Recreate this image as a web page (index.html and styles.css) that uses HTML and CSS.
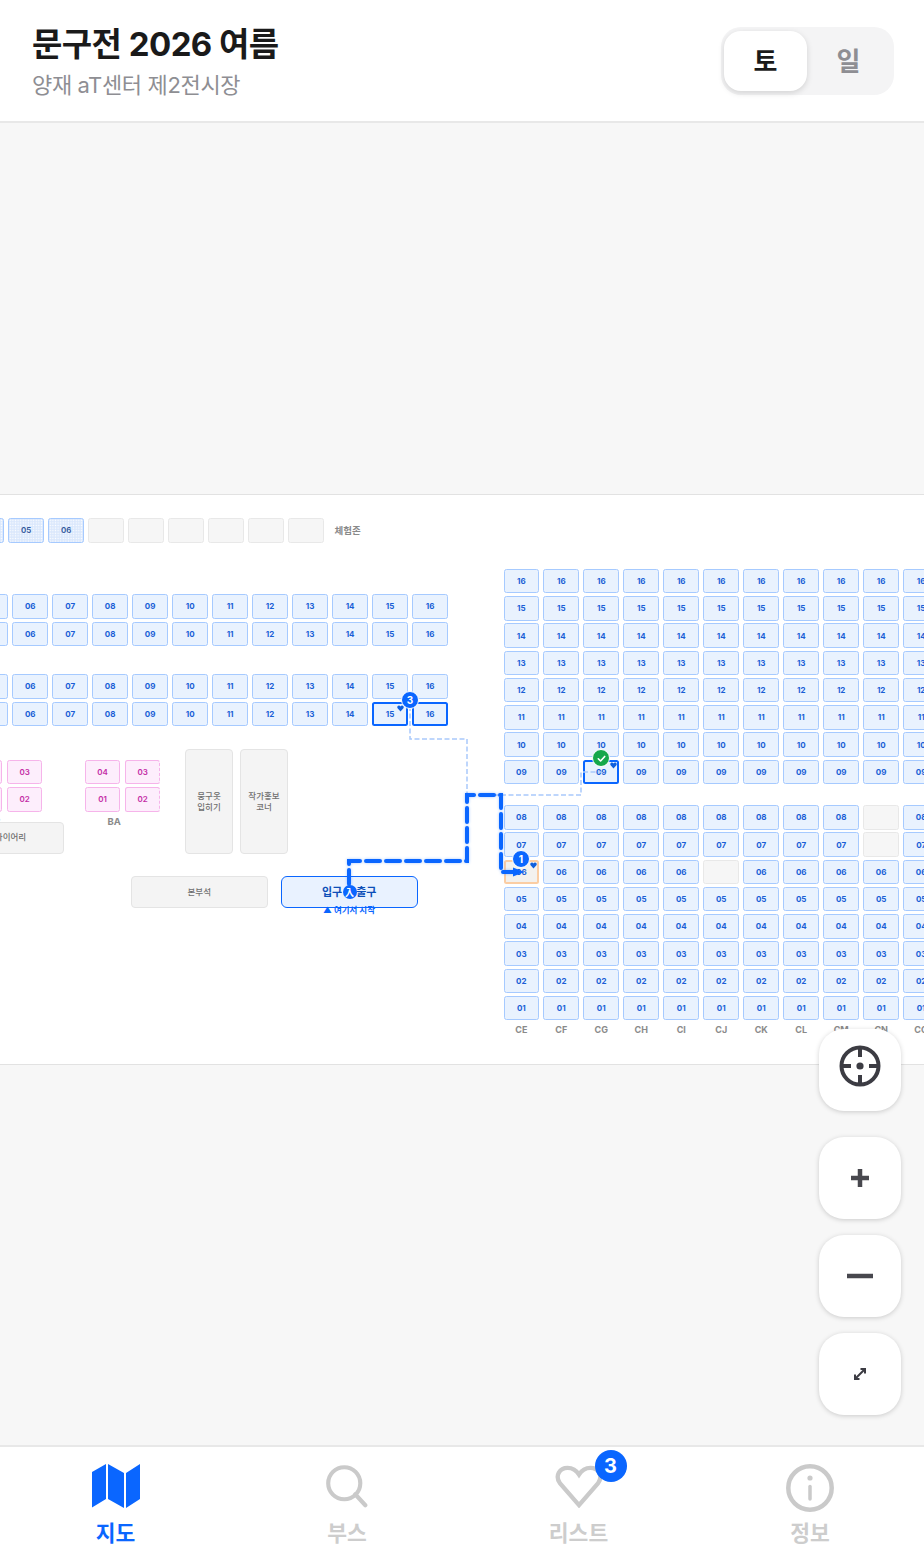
FILE: index.html
```html
<!DOCTYPE html>
<html lang="ko">
<head>
<meta charset="utf-8">
<title>문구전 2026 여름</title>
<link rel="stylesheet" href="styles.css">
</head>
<body>
<div class="app">
  <header class="top">
    <div class="heading">
      <h1>문구전 2026 여름</h1>
      <p>양재 aT센터 제2전시장</p>
    </div>
    <div class="seg">
      <button class="seg-btn on">토</button>
      <button class="seg-btn">일</button>
    </div>
  </header>

  <main class="stage">
    <section class="map">
      <div class="canvas">
      <div class="grid exp">
        <div class="b dot"></div><div class="b dot">05</div><div class="b dot">06</div>
        <div class="b void"></div><div class="b void"></div><div class="b void"></div><div class="b void"></div><div class="b void"></div><div class="b void"></div>
      </div>
      <span class="cap cap-exp">체험존</span>

      <div class="grid left-a">
        <div class="b"></div><div class="b">06</div><div class="b">07</div><div class="b">08</div><div class="b">09</div><div class="b">10</div><div class="b">11</div><div class="b">12</div><div class="b">13</div><div class="b">14</div><div class="b">15</div><div class="b">16</div>
        <div class="b"></div><div class="b">06</div><div class="b">07</div><div class="b">08</div><div class="b">09</div><div class="b">10</div><div class="b">11</div><div class="b">12</div><div class="b">13</div><div class="b">14</div><div class="b">15</div><div class="b">16</div>
      </div>
      <div class="grid left-b">
        <div class="b"></div><div class="b">06</div><div class="b">07</div><div class="b">08</div><div class="b">09</div><div class="b">10</div><div class="b">11</div><div class="b">12</div><div class="b">13</div><div class="b">14</div><div class="b">15</div><div class="b">16</div>
        <div class="b"></div><div class="b">06</div><div class="b">07</div><div class="b">08</div><div class="b">09</div><div class="b">10</div><div class="b">11</div><div class="b">12</div><div class="b">13</div><div class="b">14</div><div class="b sel">15</div><div class="b sel">16</div>
      </div>

      <div class="grid pink-a">
        <div class="b pk"></div><div class="b pk">03</div>
        <div class="b pk"></div><div class="b pk">02</div>
      </div>
      <div class="grid pink-b">
        <div class="b pk">04</div><div class="b pk dash">03</div>
        <div class="b pk">01</div><div class="b pk dash">02</div>
      </div>
      <span class="cap cap-bb">BB</span>
      <span class="cap cap-ba">BA</span>

      <div class="room diary">다이어리</div>
      <div class="room tall t1">뭉구옷<br>입히기</div>
      <div class="room tall t2">작가홍보<br>코너</div>
      <div class="room hq">본부석</div>
      <div class="room gate"><span>입구</span><span>출구</span></div>
      <span class="start-note">▲ 여기서 시작</span>

      <div class="grid right-top">
        <div class="b">16</div><div class="b">16</div><div class="b">16</div><div class="b">16</div><div class="b">16</div><div class="b">16</div><div class="b">16</div><div class="b">16</div><div class="b">16</div><div class="b">16</div><div class="b">16</div>
        <div class="b">15</div><div class="b">15</div><div class="b">15</div><div class="b">15</div><div class="b">15</div><div class="b">15</div><div class="b">15</div><div class="b">15</div><div class="b">15</div><div class="b">15</div><div class="b">15</div>
        <div class="b">14</div><div class="b">14</div><div class="b">14</div><div class="b">14</div><div class="b">14</div><div class="b">14</div><div class="b">14</div><div class="b">14</div><div class="b">14</div><div class="b">14</div><div class="b">14</div>
        <div class="b">13</div><div class="b">13</div><div class="b">13</div><div class="b">13</div><div class="b">13</div><div class="b">13</div><div class="b">13</div><div class="b">13</div><div class="b">13</div><div class="b">13</div><div class="b">13</div>
        <div class="b">12</div><div class="b">12</div><div class="b">12</div><div class="b">12</div><div class="b">12</div><div class="b">12</div><div class="b">12</div><div class="b">12</div><div class="b">12</div><div class="b">12</div><div class="b">12</div>
        <div class="b">11</div><div class="b">11</div><div class="b">11</div><div class="b">11</div><div class="b">11</div><div class="b">11</div><div class="b">11</div><div class="b">11</div><div class="b">11</div><div class="b">11</div><div class="b">11</div>
        <div class="b">10</div><div class="b">10</div><div class="b">10</div><div class="b">10</div><div class="b">10</div><div class="b">10</div><div class="b">10</div><div class="b">10</div><div class="b">10</div><div class="b">10</div><div class="b">10</div>
        <div class="b">09</div><div class="b">09</div><div class="b sel">09</div><div class="b">09</div><div class="b">09</div><div class="b">09</div><div class="b">09</div><div class="b">09</div><div class="b">09</div><div class="b">09</div><div class="b">09</div>
      </div>

      <div class="grid right-bottom">
        <div class="b">08</div><div class="b">08</div><div class="b">08</div><div class="b">08</div><div class="b">08</div><div class="b">08</div><div class="b">08</div><div class="b">08</div><div class="b">08</div><div class="b void"></div><div class="b">08</div>
        <div class="b">07</div><div class="b">07</div><div class="b">07</div><div class="b">07</div><div class="b">07</div><div class="b">07</div><div class="b">07</div><div class="b">07</div><div class="b">07</div><div class="b void"></div><div class="b">07</div>
        <div class="b visited">06</div><div class="b">06</div><div class="b">06</div><div class="b">06</div><div class="b">06</div><div class="b void"></div><div class="b">06</div><div class="b">06</div><div class="b">06</div><div class="b">06</div><div class="b">06</div>
        <div class="b">05</div><div class="b">05</div><div class="b">05</div><div class="b">05</div><div class="b">05</div><div class="b">05</div><div class="b">05</div><div class="b">05</div><div class="b">05</div><div class="b">05</div><div class="b">05</div>
        <div class="b">04</div><div class="b">04</div><div class="b">04</div><div class="b">04</div><div class="b">04</div><div class="b">04</div><div class="b">04</div><div class="b">04</div><div class="b">04</div><div class="b">04</div><div class="b">04</div>
        <div class="b">03</div><div class="b">03</div><div class="b">03</div><div class="b">03</div><div class="b">03</div><div class="b">03</div><div class="b">03</div><div class="b">03</div><div class="b">03</div><div class="b">03</div><div class="b">03</div>
        <div class="b">02</div><div class="b">02</div><div class="b">02</div><div class="b">02</div><div class="b">02</div><div class="b">02</div><div class="b">02</div><div class="b">02</div><div class="b">02</div><div class="b">02</div><div class="b">02</div>
        <div class="b">01</div><div class="b">01</div><div class="b">01</div><div class="b">01</div><div class="b">01</div><div class="b">01</div><div class="b">01</div><div class="b">01</div><div class="b">01</div><div class="b">01</div><div class="b">01</div>
        <div class="col">CE</div><div class="col">CF</div><div class="col">CG</div><div class="col">CH</div><div class="col">CI</div><div class="col">CJ</div><div class="col">CK</div><div class="col">CL</div><div class="col">CM</div><div class="col">CN</div><div class="col">CO</div>
      </div>

      <svg class="route" viewBox="0 496 924 568" aria-hidden="true">
        <path class="thin" d="M410 706V739H467V795H581V772H601"/>
        <path class="thick" d="M349 884V861H467V795H501V872H517"/>
        <path class="tip" d="M513 867.5L524 872L513 876.5Z"/>
      </svg>

      <svg class="heart h1" viewBox="0 0 12 12" aria-hidden="true"><path d="M6 11L1 5.6C-.4 3.4 1.200 1 3.300 1 4.500 1 5.400 1.700 6 2.700 6.600 1.700 7.500 1 8.700 1 10.800 1 12.400 3.400 11 5.600Z"/></svg>
      <svg class="heart h2" viewBox="0 0 12 12" aria-hidden="true"><path d="M6 11L1 5.6C-.4 3.4 1.200 1 3.300 1 4.500 1 5.400 1.700 6 2.700 6.600 1.700 7.500 1 8.700 1 10.800 1 12.400 3.400 11 5.600Z"/></svg>
      <svg class="heart h3" viewBox="0 0 12 12" aria-hidden="true"><path d="M6 11L1 5.6C-.4 3.4 1.200 1 3.300 1 4.500 1 5.400 1.700 6 2.700 6.600 1.700 7.500 1 8.700 1 10.800 1 12.400 3.400 11 5.600Z"/></svg>

      <span class="pin p1">1</span>
      <span class="pin p3">3</span>
      <span class="pin pc"><svg viewBox="0 0 12 12" aria-hidden="true"><path d="M2.500 6.300L5 8.700 9.500 3.800"/></svg></span>
      <span class="pin pstart">入</span>
      </div>
    </section>

    <div class="tools">
      <button class="tool locate" aria-label="현재 위치">
        <svg viewBox="0 0 44 44" aria-hidden="true">
          <circle cx="22" cy="22" r="18.500"/>
          <path d="M22 2V13M22 31V42M2 22H13M31 22H42"/>
          <circle class="core" cx="22" cy="22" r="3.600"/>
        </svg>
      </button>
      <button class="tool" aria-label="확대">
        <svg class="ico-plus" viewBox="0 0 20 20" aria-hidden="true"><path d="M10 1V19M1 10H19"/></svg>
      </button>
      <button class="tool" aria-label="축소">
        <svg class="ico-minus" viewBox="0 0 26 6" aria-hidden="true"><path d="M0 3H26"/></svg>
      </button>
      <button class="tool" aria-label="전체 보기">
        <svg class="ico-fit" viewBox="0 0 16 16" aria-hidden="true"><path d="M3 13L13 3M8.500 3H13V7.500M3 8.500V13H7.500"/></svg>
      </button>
    </div>
  </main>

  <nav class="tabs">
    <a class="tab active">
      <svg class="tab-ico" viewBox="0 0 48 44" aria-hidden="true"><path d="M0 8L14 0V35L0 43.500ZM16 0L32 9V44L16 35ZM34 9L48 0V35L34 44Z"/></svg>
      <span>지도</span>
    </a>
    <a class="tab">
      <svg class="tab-ico line" viewBox="0 0 48 48" aria-hidden="true"><circle cx="21" cy="21" r="17.500"/><path d="M33 33L44 45"/></svg>
      <span>부스</span>
    </a>
    <a class="tab">
      <span class="tab-wrap">
        <svg class="tab-ico line" viewBox="0 0 50 46" aria-hidden="true"><path d="M25 43L5 20C-.5 12 5 4 13 4 18.500 4 22.500 7 25 11 27.500 7 31.500 4 37 4 45 4 50.500 12 45 20Z"/></svg>
        <span class="count">3</span>
      </span>
      <span>리스트</span>
    </a>
    <a class="tab">
      <svg class="tab-ico line info" viewBox="0 0 48 48" aria-hidden="true"><circle cx="24" cy="24" r="21.700"/><path class="i" d="M24 22.500V35"/><circle class="i-dot" cx="24" cy="14" r="2.600"/></svg>
      <span>정보</span>
    </a>
  </nav>
</div>
</body>
</html>
```
FILE: styles.css
```css
* { box-sizing: border-box; margin: 0; padding: 0; }
html, body { width: 924px; height: 1554px; overflow: hidden; }
body {
  background: #f7f7f7;
  color: #1a1a1a;
  font-family: Inter, "Noto Sans CJK KR", "Noto Sans", sans-serif;
}
.app { display: flex; flex-direction: column; height: 1554px; }

/* header */
.top {
  height: 123px;
  flex: none;
  display: flex;
  justify-content: space-between;
  padding: 27px 30px 0 32px;
  background: #fff;
  border-bottom: 2px solid #e8e8e8;
}
.heading { padding-top: 1px; }
.heading h1 {
  font-size: 33px;
  line-height: 32px;
  font-weight: 700;
  letter-spacing: -0.55px;
  color: #1a1a1a;
}
.heading p {
  margin-top: 10px;
  font-size: 22px;
  line-height: 30px;
  font-weight: 400;
  letter-spacing: -0.35px;
  color: #8e8e93;
}
.seg {
  display: flex;
  width: 173px;
  height: 68px;
  padding: 4px 4px 4px 3px;
  border-radius: 20px;
  background: #f4f4f5;
}
.seg-btn {
  flex: 1;
  border: 0;
  padding-top: 2px;
  background: transparent;
  border-radius: 17px;
  font: 700 26px/1 Inter, "Noto Sans CJK KR", sans-serif;
  color: #8e8e93;
}
.seg-btn.on {
  color: #1a1a1a;
  background: #fff;
  box-shadow: 0 2px 6px rgba(0, 0, 0, .14);
}

/* map stage */
.stage { position: relative; flex: 1; padding-top: 371px; min-height: 0; }
.map {
  height: 571px;
  overflow: hidden;
  background: #fff;
  border-top: 1px solid #e2e2e2;
  border-bottom: 1px solid #e2e2e2;
}
.canvas { position: relative; height: 568px; margin-top: 1px; }
.grid {
  position: absolute;
  display: grid;
  grid-auto-rows: 24.4px;
  grid-template-columns: repeat(12, 35.6px);
  column-gap: 4.4px;
  row-gap: 2.85px;
}
.b {
  display: flex;
  align-items: center;
  justify-content: center;
  background: #e9f2fe;
  border: 1px solid #a6caff;
  border-radius: 2.5px;
  font-size: 8px;
  font-weight: 700;
  line-height: 1;
  color: #1a5fd6;
}
.b.dot {
  background-color: #dbe8fc;
  background-image: radial-gradient(#fff 0.7px, transparent 0.9px);
  background-size: 2.6px 2.6px;
  color: #33599c;
  font-weight: 600;
}
.b.void {
  background-color: #f6f6f6;
  border-color: #e8e8e8;
}
.b.sel { border: 2px solid #0a66ff; }
.b.visited { border: 2px solid #fbcda3; background: #f3f1ee; }
.b.pk { background: #fdeefc; border-color: #f6b4ea; color: #c42da6; font-weight: 600; }
.b.pk.dash { border-right-style: dashed; }

.exp { left: -31.7px; top: 22.3px; grid-template-columns: repeat(9, 35.6px); }
.left-a { left: -27.6px; top: 98.3px; }
.left-b { left: -27.6px; top: 178.3px; }
.right-top { left: 503.5px; top: 73px; grid-template-columns: repeat(11, 35.6px); }
.right-bottom { left: 503.5px; top: 309.2px; grid-template-columns: repeat(11, 35.6px); }
.pink-a { left: -33px; top: 264px; grid-template-columns: repeat(2, 35.2px); column-gap: 4.8px; }
.pink-b { left: 85px; top: 264px; grid-template-columns: repeat(2, 35.2px); column-gap: 4.8px; }

.col {
  align-self: start;
  text-align: center;
  font-size: 9px;
  line-height: 14px;
  font-weight: 700;
  color: #8a8a8a;
}
.cap { position: absolute; font-size: 9.5px; line-height: 12px; font-weight: 700; color: #8a8a8a; }
.cap-exp { left: 334.500px; top: 29px; }
.cap-bb { left: -12px; top: 320px; }
.cap-ba { left: 107.500px; top: 320px; }

.room {
  position: absolute;
  display: flex;
  align-items: center;
  justify-content: center;
  text-align: center;
  background: #f4f4f4;
  border: 1px solid #e4e4e4;
  border-radius: 4px;
  font-size: 8.5px;
  line-height: 11px;
  font-weight: 500;
  color: #6f6f6f;
}
.diary { left: -42.5px; top: 326px; width: 106px; height: 31.500px; }
.tall { top: 253px; width: 48px; height: 105px; }
.t1 { left: 185px; }
.t2 { left: 240px; }
.hq { left: 130.500px; top: 380px; width: 137.500px; height: 32px; }
.gate {
  left: 280.500px;
  top: 380px;
  width: 137.500px;
  height: 32px;
  gap: 14px;
  background: #e9f2ff;
  border: 1.500px solid #0a66ff;
  border-radius: 6px;
  font-size: 11px;
  font-weight: 700;
  color: #0d4fb8;
}
.start-note {
  position: absolute;
  left: 323px;
  top: 408px;
  font-size: 8.500px;
  line-height: 12px;
  font-weight: 700;
  color: #0a66ff;
}

/* route overlay */
.route { position: absolute; left: 0; top: 0; width: 924px; height: 568px; fill: none; }
.thin { stroke: #a9c9fb; stroke-width: 1.500; stroke-dasharray: 5 2.500; }
.thick {
  stroke: #0a66ff;
  stroke-width: 4;
  stroke-linecap: round;
  stroke-dasharray: 14 6;
  filter: drop-shadow(0 0 1.500px rgba(10, 102, 255, .35));
}
.tip { fill: #0a66ff; }

.heart { position: absolute; width: 7px; height: 7px; fill: #0f5fdc; }
.h1 { left: 529.500px; top: 365.500px; }
.h2 { left: 609.500px; top: 265.500px; }
.h3 { left: 396.500px; top: 208.500px; }

.pin {
  position: absolute;
  display: flex;
  align-items: center;
  justify-content: center;
  width: 18px;
  height: 18px;
  border: 1.500px solid #fff;
  border-radius: 50%;
  background: #0a66ff;
  color: #fff;
  font-size: 10px;
  line-height: 1;
  font-weight: 700;
}
.p1 { left: 512px; top: 354px; }
.p3 { left: 401px; top: 195px; }
.pc { left: 592px; top: 253px; background: #16a84a; }
.pc svg { width: 11px; height: 11px; fill: none; stroke: #fff; stroke-width: 1.800; stroke-linecap: round; stroke-linejoin: round; }
.pstart {
  left: 342.500px;
  top: 389px;
  width: 14px;
  height: 14px;
  border: 0;
  font-size: 9px;
  font-family: "Noto Sans CJK KR", sans-serif;
}

/* floating tools */
.tools {
  position: absolute;
  right: 23px;
  top: 906px;
  display: flex;
  flex-direction: column;
  gap: 16px;
}
.tool {
  display: flex;
  align-items: center;
  justify-content: center;
  width: 82px;
  height: 82px;
  border: 0;
  border-radius: 25px;
  background: #fff;
  box-shadow: 0 1px 5px rgba(0, 0, 0, .18);
}
.tool.locate { margin-bottom: 10px; padding-bottom: 8px; }
.locate svg { width: 44px; height: 44px; fill: none; stroke: #3c3c43; stroke-width: 4; }
.locate .core { fill: #3c3c43; stroke: none; }
.ico-plus { width: 20px; height: 20px; fill: none; stroke: #48484e; stroke-width: 4.500; }
.ico-minus { width: 26px; height: 6px; fill: none; stroke: #48484e; stroke-width: 4.500; }
.ico-fit { width: 16px; height: 16px; fill: none; stroke: #3c3c43; stroke-width: 2; }

/* bottom tabs */
.tabs {
  flex: none;
  height: 109px;
  display: grid;
  grid-template-columns: repeat(4, 231px);
  column-gap: .5px;
  overflow: hidden;
  background: #fff;
  border-top: 2px solid #e8e8e8;
}
.tab {
  display: flex;
  flex-direction: column;
  align-items: center;
  padding-top: 17px;
  font-size: 21.5px;
  line-height: 28px;
  font-weight: 700;
  color: #cdcdcd;
}
.tab-ico { display: block; width: 48px; height: 44px; margin-bottom: 11px; }
.tab-ico.info { height: 48px; margin-bottom: 7px; }
.active { color: #0a66ff; }
.active .tab-ico { fill: #0a66ff; }
.tab-ico.line { fill: none; stroke: #cacaca; stroke-width: 4.500; stroke-linecap: round; }
.line .i { stroke-width: 3.500; }
.line .i-dot { fill: #cacaca; stroke: none; }
.tab-wrap { position: relative; display: block; }
.count {
  position: absolute;
  left: 40px;
  top: -14px;
  width: 32px;
  height: 32px;
  border-radius: 50%;
  background: #0a66ff;
  color: #fff;
  font-size: 20px;
  line-height: 32px;
  text-align: center;
  font-weight: 700;
}
```
